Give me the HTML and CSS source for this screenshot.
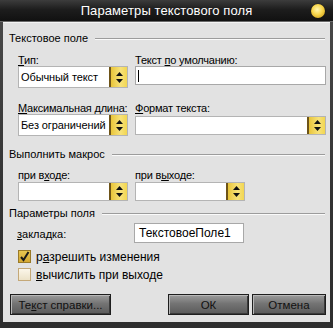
FILE: index.html
```html
<!DOCTYPE html>
<html lang="ru">
<head>
  <meta charset="UTF-8" />
  <title>Параметры текстового поля</title>
  <link rel="stylesheet" href="styles.css">
</head>
<body>

<div class="window">
  <div class="titlebar">
    <span class="title">Параметры текстового поля</span>
    <span class="orb"></span>
  </div>

  <div class="content">
    <div class="group"><span>Текстовое поле</span></div>

    <div class="row first">
      <div class="field">
        <div class="label"><u>Т</u>ип:</div>
        <div class="combo tall">
          <span class="value">Обычный текст</span>
          <span class="spin"><svg width="7" height="11" viewBox="0 0 7 11"><path d="M3.5 0 L7 4 L0 4 Z M0 7 L7 7 L3.5 11 Z" fill="#111"/></svg></span>
        </div>
      </div>
      <div class="field">
        <div class="label">Текст <u>п</u>о умолчанию:</div>
        <div class="input plain"><span class="caret"></span></div>
      </div>
    </div>

    <div class="row second">
      <div class="field">
        <div class="label"><u>М</u>аксимальная длина:</div>
        <div class="combo tall">
          <span class="value">Без ограничений</span>
          <span class="spin"><svg width="7" height="11" viewBox="0 0 7 11"><path d="M3.5 0 L7 4 L0 4 Z M0 7 L7 7 L3.5 11 Z" fill="#111"/></svg></span>
        </div>
      </div>
      <div class="field">
        <div class="label"><u>Ф</u>ормат текста:</div>
        <div class="combo short shifted">
          <span class="value"></span>
          <span class="spin"><svg width="7" height="11" viewBox="0 0 7 11"><path d="M3.5 0 L7 4 L0 4 Z M0 7 L7 7 L3.5 11 Z" fill="#111"/></svg></span>
        </div>
      </div>
    </div>

    <div class="group macro"><span>Выполнить макрос</span></div>

    <div class="row third">
      <div class="field">
        <div class="label">при в<u>х</u>оде:</div>
        <div class="combo short">
          <span class="value"></span>
          <span class="spin"><svg width="7" height="11" viewBox="0 0 7 11"><path d="M3.5 0 L7 4 L0 4 Z M0 7 L7 7 L3.5 11 Z" fill="#111"/></svg></span>
        </div>
      </div>
      <div class="field narrow">
        <div class="label">при в<u>ы</u>ходе:</div>
        <div class="combo short">
          <span class="value"></span>
          <span class="spin"><svg width="7" height="11" viewBox="0 0 7 11"><path d="M3.5 0 L7 4 L0 4 Z M0 7 L7 7 L3.5 11 Z" fill="#111"/></svg></span>
        </div>
      </div>
    </div>

    <div class="group params"><span>Параметры поля</span></div>

    <div class="bookmark">
      <span class="bm-label"><u>з</u>акладка:</span>
      <div class="input bm">ТекстовоеПоле1</div>
    </div>

    <label class="check first-check">
      <span class="box checked"><svg width="11" height="11" viewBox="0 0 11 11"><path d="M2 6 L4.5 9 L9.5 1" stroke="#1a1a1a" stroke-width="2" fill="none"/></svg></span>
      <span>р<u>а</u>зрешить изменения</span>
    </label>
    <label class="check">
      <span class="box"></span>
      <span><u>в</u>ычислить при выходе</span>
    </label>

    <div class="buttons">
      <button class="btn help">Те<u>к</u>ст справки...</button>
      <span class="spacer"></span>
      <button class="btn ok">ОК</button>
      <button class="btn cancel">Отмена</button>
    </div>
  </div>
</div>

</body>
</html>
```

FILE: styles.css
```css
body {
  margin: 0;
  padding: 0;
  font-family: 'Liberation Sans', Arial, sans-serif;
  font-size: 11px;
  color: #000;
  background: #3a3a3a;
}
u {
  text-decoration: underline;
  text-underline-offset: 1px;
}
.window {
  width: 333px;
  height: 328px;
  box-sizing: border-box;
  padding: 0 3px 6px 3px;
  background: linear-gradient(#4a4a4a, #333 60%, #2e2e2e);
  display: flex;
  flex-direction: column;
}
.titlebar {
  height: 22px;
  flex: none;
  position: relative;
  display: flex;
  align-items: center;
  justify-content: center;
  background: linear-gradient(#3c3c3c, #1d1d1d 45%, #111 100%);
  margin: 0 -3px;
  border-bottom: 1px solid #6a6a6a;
  box-sizing: border-box;
}
.title {
  color: #fff;
  font-size: 13px;
  letter-spacing: 0.1px;
}
.orb {
  position: absolute;
  right: 8px;
  top: 4px;
  width: 14px;
  height: 14px;
  border-radius: 50%;
  background: radial-gradient(circle at 45% 40%, #fff6b0 0%, #f6d44a 45%, #c99a18 90%);
  box-shadow: 0 0 1px #000;
}
.content {
  flex: 1;
  background: #e2e2e2;
  padding: 9px 4px 0 6px;
  border-top: 1px solid #f4f4f4;
}
.group {
  display: flex;
  align-items: center;
  height: 13px;
  line-height: 13px;
}
.group::after {
  content: "";
  flex: 1;
  margin-left: 7px;
  margin-right: 1px;
  border-top: 1px solid #9c9c9c;
  border-bottom: 1px solid #fafafa;
}
.row {
  display: grid;
  grid-template-columns: 110px 191px;
  column-gap: 7px;
  padding-left: 9px;
}
.row.first { margin-top: 9px; }
.row.second { margin-top: 14px; }
.row.third { margin-top: 8px; grid-template-columns: 110px 110px; }
.label {
  height: 13px;
  line-height: 13px;
  white-space: nowrap;
  letter-spacing: -0.2px;
}
.combo {
  display: flex;
  background: #fff;
  border: 1px solid #b4b4b4;
  box-sizing: border-box;
  margin-top: -1px;
  overflow: hidden;
}
.combo.tall { height: 22px; }
.combo.short { height: 19px; margin-top: 0; }
.combo.shifted { margin-top: 1px; }
.value {
  flex: 1;
  min-width: 0;
  line-height: 20px;
  padding-left: 2px;
  font-size: 11px;
  letter-spacing: -0.1px;
  white-space: nowrap;
}
.spin {
  width: 16px;
  flex: none;
  display: flex;
  align-items: center;
  justify-content: center;
  border-left: 2px solid #6e5418;
  background: linear-gradient(90deg, #e9c53a, #f7e27a 60%, #f2d650);
}
.input {
  background: #fff;
  border: 1px solid #a8a8a8;
  box-sizing: border-box;
}
.input.plain {
  height: 19px;
  margin-top: -1px;
  padding: 3px 0 0 2px;
}
.caret {
  display: block;
  width: 1px;
  height: 12px;
  background: #000;
}
.group.macro { margin-top: 12px; }
.group.params { margin-top: 6px; }
.bookmark {
  display: grid;
  grid-template-columns: 117px 110px;
  padding-left: 8px;
  margin-top: 3px;
  align-items: center;
}
.bm-label { padding-top: 2px; }
.input.bm {
  height: 20px;
  line-height: 18px;
  padding-left: 4px;
  font-size: 12px;
}
.check {
  display: flex;
  align-items: center;
  gap: 5px;
  padding-left: 9px;
  height: 13px;
  font-size: 12px;
}
.check.first-check { margin-top: 7px; }
.check + .check { margin-top: 5px; }
.box {
  width: 11px;
  height: 11px;
  flex: none;
  border: 1px solid #c4a878;
  background: linear-gradient(#fbf6ea, #ece2c8);
  display: flex;
}
.box.checked {
  border-color: #9a7a28;
  background: linear-gradient(#e8c650, #d4a834);
}
.buttons {
  display: flex;
  margin-top: 13px;
  padding-left: 1px;
  gap: 3px;
}
.spacer { flex: 1; }
.btn {
  height: 21px;
  font-family: inherit;
  font-size: 11.5px;
  font-weight: normal;
  color: #111;
  border: 1px solid #1e1e1e;
  background: linear-gradient(#9c9c9c, #747474 45%, #5a5a5a);
  box-shadow: inset 1px 1px 0 #b8b8b8, inset -1px -1px 0 #3a3a3a;
  padding: 0;
}
.btn.help { width: 101px; }
.btn.ok { width: 81px; }
.btn.cancel { width: 74px; }
```
